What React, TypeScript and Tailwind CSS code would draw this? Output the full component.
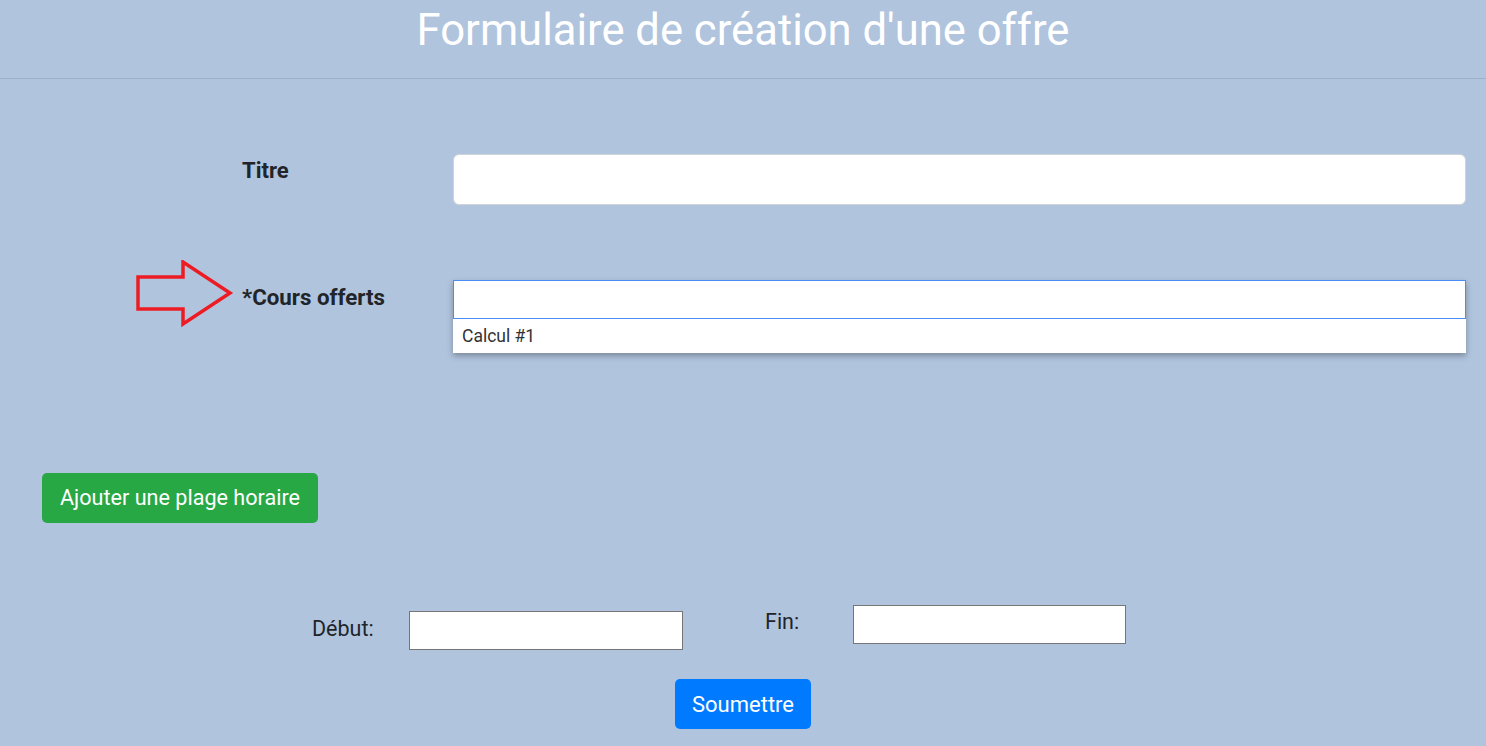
import React from 'react';

const Arrow = () => (
    <svg className="absolute left-[-106px] top-[-36px]" width="100" height="70" viewBox="0 0 100 70">
        <polygon
            points="2,17 47,17 47,2 94,33 47,64 47,49 2,49"
            fill="none"
            stroke="#ed1c24"
            strokeWidth="3.5"
            strokeLinejoin="miter"
        />
    </svg>
);

export default function App() {
    return (
        <div className="min-h-[746px] bg-[#b0c4de] font-['Roboto',sans-serif] text-[#212529]">
            {/* entête */}
            <div className="h-[79px] border-b border-[#9fb1c9] flex justify-center">
                <h1 className="text-[43.6px] leading-[58px] text-white pt-[2px]">Formulaire de création d'une offre</h1>
            </div>

            {/* Titre */}
            <div className="flex items-start mt-[75px] pr-[20px]">
                <label className="pl-[242px] w-[453px] text-[22px] font-bold leading-[28px] pt-[3px]">Titre</label>
                <input className="flex-1 h-[51px] bg-white rounded-[6px] border border-[#ced4da] outline-none" />
            </div>

            {/* Cours offerts */}
            <div className="flex items-start mt-[75px] pr-[20px]">
                <div className="pl-[242px] w-[453px]">
                    <label className="relative inline-block text-[22.3px] font-bold leading-[28px] pt-[3px]">
                        <span className="absolute left-0 top-1/2"><Arrow /></span>
                        *Cours offerts
                    </label>
                </div>
                <div className="flex-1 shadow-[0_3px_6px_rgba(0,0,0,0.3)]">
                    <input className="block w-full h-[39px] bg-white border border-[#4a8cf7] outline-none" />
                    <div className="bg-white h-[34px] px-[9px] text-[17.5px] leading-[34px] text-[#333]">Calcul #1</div>
                </div>
            </div>

            {/* plage horaire */}
            <div className="mt-[120px] pl-[42px]">
                <button className="h-[50px] px-[18px] rounded-[5px] bg-[#28a745] text-white text-[21.6px]">Ajouter une plage horaire</button>
            </div>

            {/* Début / Fin */}
            <div className="flex items-start mt-[82px]">
                <div className="flex items-start pl-[312px] mt-[6px]">
                    <span className="text-[21.5px] leading-[26px] w-[97px] mt-[5px]">Début:</span>
                    <input className="w-[274px] h-[39px] bg-white border border-[#767676] outline-none" />
                </div>
                <div className="flex items-start ml-[82px]">
                    <span className="text-[21.5px] leading-[26px] w-[88px] mt-[4px]">Fin:</span>
                    <input className="w-[273px] h-[39px] bg-white border border-[#767676] outline-none" />
                </div>
            </div>

            {/* Soumettre */}
            <div className="flex justify-center mt-[29px]">
                <button className="h-[50px] px-[17px] rounded-[5px] bg-[#007bff] text-white text-[22px]">Soumettre</button>
            </div>
        </div>
    );
}
